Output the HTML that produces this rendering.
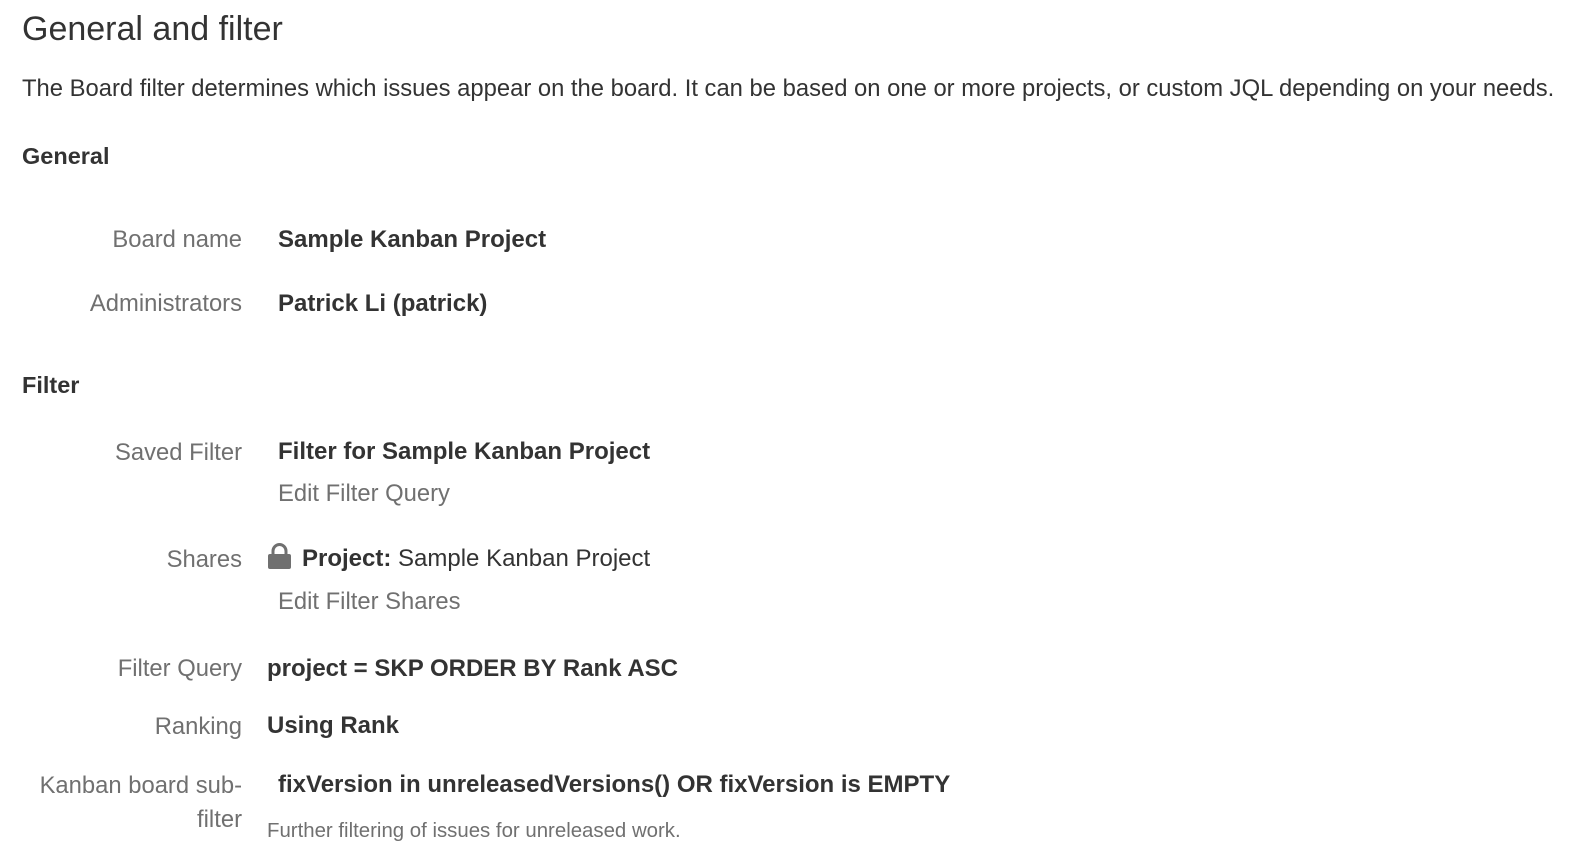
<!DOCTYPE html>
<html><head><style>
body{margin:0;background:#fff;font-family:"Liberation Sans",Arial,sans-serif;color:#333;width:1586px;height:861px;position:relative;overflow:hidden}
div{position:absolute;white-space:nowrap}
.l{right:1344px;text-align:right;color:#707070;font-size:23.8px}
.v{font-size:24px;font-weight:bold;color:#333}
.a{font-size:23.8px;color:#707070}
</style></head><body>
<div style="left:22px;top:10px;font-size:34px;color:#333">General and filter</div>
<div style="left:22px;top:75px;font-size:23.8px;color:#333">The Board filter determines which issues appear on the board. It can be based on one or more projects, or custom JQL depending on your needs.</div>
<div style="left:22px;top:143px;font-size:23.5px;font-weight:bold">General</div>
<div class="l" style="top:226px">Board name</div>
<div class="v" style="left:278px;top:226px">Sample Kanban Project</div>
<div class="l" style="top:290px">Administrators</div>
<div class="v" style="left:278px;top:290px">Patrick Li (patrick)</div>
<div style="left:22px;top:372px;font-size:23.5px;font-weight:bold">Filter</div>
<div class="l" style="top:439px">Saved Filter</div>
<div class="v" style="left:278px;top:438px">Filter for Sample Kanban Project</div>
<div class="a" style="left:278px;top:480px">Edit Filter Query</div>
<div class="l" style="top:546px">Shares</div>
<svg style="position:absolute;left:267px;top:543px" width="25" height="27" viewBox="0 0 25 27"><path d="M6 12V8a6.5 6.5 0 0 1 13 0v4" fill="none" stroke="#707070" stroke-width="3"/><rect x="1" y="11" width="23" height="15" rx="2" fill="#707070"/></svg>
<div style="left:302px;top:545px;font-size:24px;color:#333"><b>Project:</b> Sample Kanban Project</div>
<div class="a" style="left:278px;top:588px">Edit Filter Shares</div>
<div class="l" style="top:655px">Filter Query</div>
<div class="v" style="left:267px;top:655px">project = SKP ORDER BY Rank ASC</div>
<div class="l" style="top:713px">Ranking</div>
<div class="v" style="left:267px;top:712px">Using Rank</div>
<div class="l" style="top:769px;line-height:34px">Kanban board sub-<br>filter</div>
<div class="v" style="left:278px;top:771px">fixVersion in unreleasedVersions() OR fixVersion is EMPTY</div>
<div style="left:267px;top:820px;font-size:20.4px;color:#707070">Further filtering of issues for unreleased work.</div>
</body></html>
